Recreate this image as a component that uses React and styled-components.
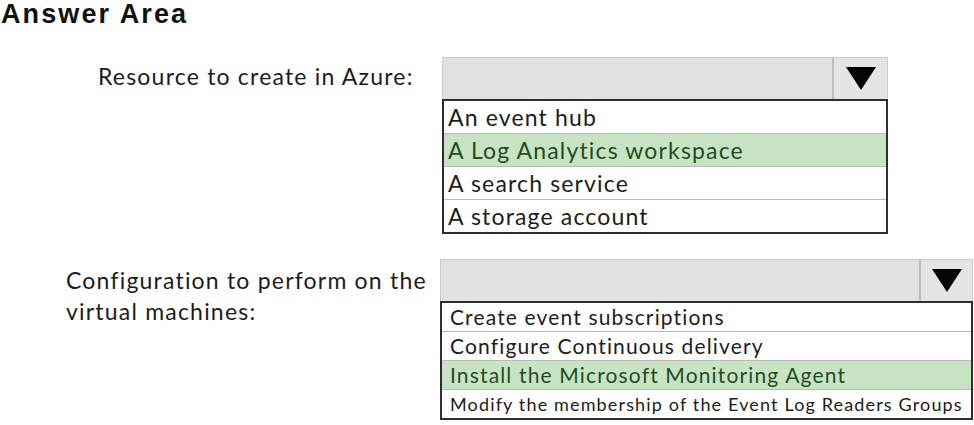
import React from "react"
import styled, { createGlobalStyle } from "styled-components"

const GlobalStyle = createGlobalStyle`
  html, body {
    margin: 0;
    padding: 0;
    background: #fff;
  }
  body {
    font-family: Lato, "Open Sans", sans-serif;
    color: #1a1a1a;
  }
`

const Page = styled.div`
  width: 974px;
  height: 425px;
  overflow: hidden;
  background: #fff;
`

const Title = styled.h1`
  margin: 0;
  padding: 0 0 0 1px;
  font-family: "Liberation Sans", Arial, sans-serif;
  font-weight: 700;
  font-size: 27px;
  line-height: 28px;
  letter-spacing: 2.1px;
  color: #111;
`

const Question = styled.div`
  display: grid;
  grid-template-columns: ${({ labelWidth }) => labelWidth}px ${({ boxWidth }) => boxWidth}px;
  margin-top: ${({ top }) => top}px;
`

const Label = styled.div`
  padding-left: ${({ indent }) => indent}px;
  padding-top: ${({ offset }) => offset}px;
  font-size: 23px;
  line-height: 31px;
  letter-spacing: 1.2px;
  color: #1c1c1c;
`

const Dropdown = styled.div`
  display: flex;
  flex-direction: column;
`

const Header = styled.div`
  display: flex;
  height: 41px;
  background: #e1e1e1;
  border: 1px solid #cbcbcb;
  border-bottom: none;
`

const HeaderField = styled.div`
  flex: 1;
`

const ArrowCell = styled.div`
  width: ${({ arrowWidth }) => arrowWidth}px;
  display: flex;
  align-items: center;
  justify-content: center;
  border-left: 2px solid #bdbdbd;
  background: #e4e4e4;
`

const List = styled.div`
  display: flex;
  flex-direction: column;
  border: 2px solid #2e2e2e;
  background: #fff;
`

const Option = styled.div`
  height: ${({ rowHeight }) => rowHeight}px;
  line-height: ${({ rowHeight }) => rowHeight}px;
  padding-left: ${({ inset }) => inset}px;
  font-size: ${({ small, fontSize }) => (small ? fontSize - 3 : fontSize)}px;
  letter-spacing: 1.15px;
  white-space: nowrap;
  background: ${({ selected }) => (selected ? "#c8e2c4" : "#fff")};
  color: ${({ selected }) => (selected ? "#1f4f1f" : "#1c1c1c")};
  & + & {
    border-top: 1px solid #b9b9b9;
  }
`

const Arrow = () => (
  <svg width="30" height="23" viewBox="0 0 30 23">
    <polygon points="0,0 30,0 15,23" fill="#050505" />
  </svg>
)

const Select = ({ width, arrowWidth, rowHeight, fontSize, inset, options }) => (
  <Dropdown style={{ width }}>
    <Header>
      <HeaderField />
      <ArrowCell arrowWidth={arrowWidth}>
        <Arrow />
      </ArrowCell>
    </Header>
    <List>
      {options.map((o) => (
        <Option
          key={o.text}
          rowHeight={rowHeight}
          fontSize={fontSize}
          inset={inset}
          selected={o.selected}
          small={o.small}
        >
          {o.text}
        </Option>
      ))}
    </List>
  </Dropdown>
)

const resources = [
  { text: "An event hub" },
  { text: "A Log Analytics workspace", selected: true },
  { text: "A search service" },
  { text: "A storage account" },
]

const configs = [
  { text: "Create event subscriptions" },
  { text: "Configure Continuous delivery" },
  { text: "Install the Microsoft Monitoring Agent", selected: true },
  { text: "Modify the membership of the Event Log Readers Groups", small: true },
]

export default function App() {
  return (
    <Page>
      <GlobalStyle />
      <Title>Answer Area</Title>
      <Question top={29} labelWidth={442} boxWidth={446}>
        <Label indent={98} offset={4}>
          Resource to create in Azure:
        </Label>
        <Select
          width={446}
          arrowWidth={53}
          rowHeight={32}
          fontSize={23}
          inset={4}
          options={resources}
        />
      </Question>
      <Question top={25} labelWidth={440} boxWidth={533}>
        <Label indent={66} offset={6}>
          Configuration to perform on the
          <br />
          virtual machines:
        </Label>
        <Select
          width={533}
          arrowWidth={51}
          rowHeight={28}
          fontSize={21}
          inset={8}
          options={configs}
        />
      </Question>
    </Page>
  )
}
